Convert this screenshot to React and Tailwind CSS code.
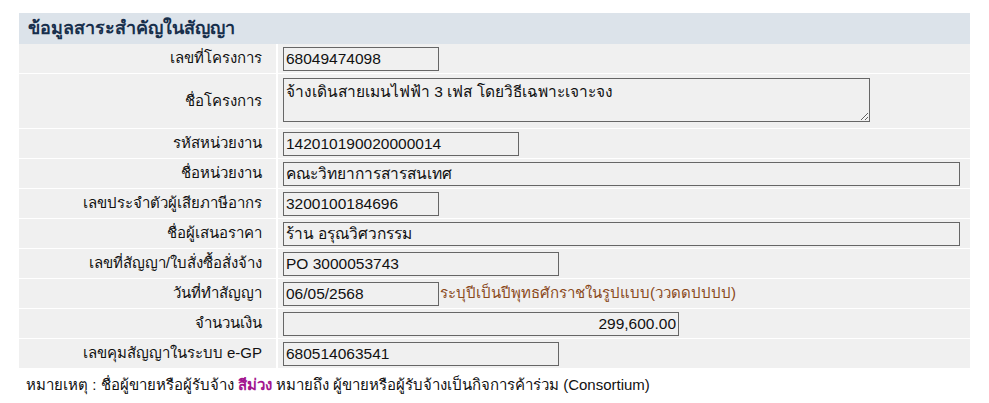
const rows = [
  { label: 'เลขที่โครงการ', value: '68049474098', width: 'w-[156px]' },
  { label: 'ชื่อโครงการ', value: 'จ้างเดินสายเมนไฟฟ้า 3 เฟส โดยวิธีเฉพาะเจาะจง', textarea: true },
  { label: 'รหัสหน่วยงาน', value: '142010190020000014', width: 'w-[236px]' },
  { label: 'ชื่อหน่วยงาน', value: 'คณะวิทยาการสารสนเทศ', width: 'w-[677px]' },
  { label: 'เลขประจำตัวผู้เสียภาษีอากร', value: '3200100184696', width: 'w-[156px]' },
  { label: 'ชื่อผู้เสนอราคา', value: 'ร้าน อรุณวิศวกรรม', width: 'w-[677px]' },
  { label: 'เลขที่สัญญา/ใบสั่งซื้อสั่งจ้าง', value: 'PO 3000053743', width: 'w-[276px]' },
  { label: 'วันที่ทำสัญญา', value: '06/05/2568', width: 'w-[156px]', hint: 'ระบุปีเป็นปีพุทธศักราชในรูปแบบ(ววดดปปปป)' },
  { label: 'จำนวนเงิน', value: '299,600.00', width: 'w-[396px]', right: true },
  { label: 'เลขคุมสัญญาในระบบ e-GP', value: '680514063541', width: 'w-[276px]' },
];

function Field({ row }) {
  if (row.textarea) {
    return (
      <textarea
        readOnly
        defaultValue={row.value}
        className="mt-[4px] h-[44px] w-[587px] self-start border border-[#666] bg-[#f0f0f0] px-[2px] pt-[3px] text-[15.5px] leading-[19px] text-[#111] outline-none"
      />
    );
  }
  return (
    <div className="flex items-center">
      <input
        readOnly
        defaultValue={row.value}
        className={`${row.width} h-[24px] border border-[#666] bg-[#f0f0f0] px-[2px] text-[15.5px] text-[#111] outline-none ${row.right ? 'text-right' : ''}`}
      />
      {row.hint && <span className="pl-[1px] text-[15px] text-[#8a4a1c]">{row.hint}</span>}
    </div>
  );
}

export default function App() {
  return (
    <div className="min-h-[403px] bg-white pt-[13px] font-['Liberation_Sans','Noto_Sans',sans-serif] text-[15px] text-[#111]">
      <div className="mx-auto w-[951px]">
        <div className="flex h-[31px] items-center bg-[#dce3ea] pl-[9px] text-[18px] font-bold text-[#182f4c]">
          ข้อมูลสาระสำคัญในสัญญา
        </div>
        <div className="flex flex-col">
          {rows.map((row) => (
            <div
              key={row.label}
              className={`grid grid-cols-[259px_1fr] border-b border-white bg-[#f0f0f0] ${row.textarea ? 'h-[55px]' : 'h-[30px]'}`}
            >
              <div className="flex items-center justify-end border-r-2 border-white pr-[14px]">{row.label}</div>
              <div className="flex items-center pl-[5px]">
                <Field row={row} />
              </div>
            </div>
          ))}
        </div>
      </div>
      <p className="pl-[26px] pt-[5px] text-[15px]">
        หมายเหตุ : ชื่อผู้ขายหรือผู้รับจ้าง <span className="font-bold text-[#a3168f]">สีม่วง</span> หมายถึง
        ผู้ขายหรือผู้รับจ้างเป็นกิจการค้าร่วม (Consortium)
      </p>
    </div>
  );
}
